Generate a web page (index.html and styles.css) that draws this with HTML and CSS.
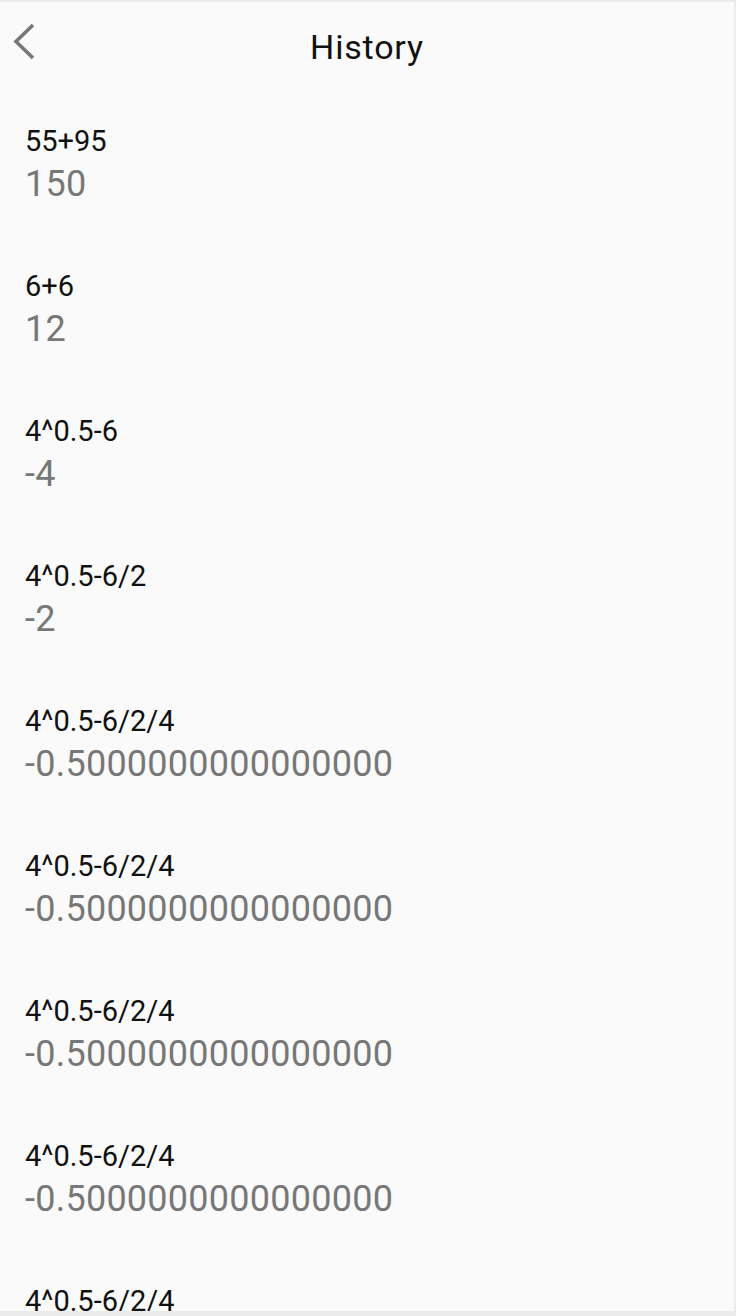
FILE: index.html
```html
<!DOCTYPE html>
<html>
<head>
<meta charset="utf-8">
<link rel="stylesheet" href="styles.css">
</head>
<body>
<div class="screen">
  <header class="bar">
    <svg class="back" viewBox="0 0 48 90" width="48" height="90">
      <polyline points="33,23 16,39.5 33,56" fill="none" stroke="#777" stroke-width="3.6" stroke-linecap="butt" stroke-linejoin="miter"/>
    </svg>
    <h1 class="title">History</h1>
    <span class="spacer"></span>
  </header>
  <ul class="list">
    <li class="item"><div class="expr">55+95</div><div class="result">150</div></li>
    <li class="item"><div class="expr">6+6</div><div class="result">12</div></li>
    <li class="item"><div class="expr">4^0.5-6</div><div class="result">-4</div></li>
    <li class="item"><div class="expr">4^0.5-6/2</div><div class="result">-2</div></li>
    <li class="item"><div class="expr">4^0.5-6/2/4</div><div class="result">-0.5000000000000000</div></li>
    <li class="item"><div class="expr">4^0.5-6/2/4</div><div class="result">-0.5000000000000000</div></li>
    <li class="item"><div class="expr">4^0.5-6/2/4</div><div class="result">-0.5000000000000000</div></li>
    <li class="item"><div class="expr">4^0.5-6/2/4</div><div class="result">-0.5000000000000000</div></li>
    <li class="item"><div class="expr">4^0.5-6/2/4</div><div class="result">-0.5000000000000000</div></li>
  </ul>
</div>
</body>
</html>
```
FILE: styles.css
```css
html, body {
  margin: 0;
  padding: 0;
  background: #ebebeb;
}
body {
  font-family: Roboto, "Liberation Sans", sans-serif;
}
.screen {
  width: 736px;
  height: 1316px;
  box-sizing: border-box;
  border-top: 2px solid #ebebeb;
  border-right: 2px solid #ebebeb;
  border-bottom: 5px solid #ebebeb;
  background: #fafafa;
  overflow: hidden;
}
.bar {
  height: 90px;
  display: grid;
  grid-template-columns: 1fr auto 1fr;
  align-items: center;
}
.back {
  display: block;
  align-self: stretch;
}
.title {
  margin: 0;
  font-size: 34px;
  letter-spacing: 0.8px;
  font-weight: 400;
  color: #111;
  line-height: 40px;
}
.list {
  list-style: none;
  margin: 0;
  padding: 0;
}
.item {
  height: 145px;
  box-sizing: border-box;
  padding: 33px 0 0 25px;
}
.expr {
  font-size: 29px;
  line-height: 33px;
  color: #111;
}
.result {
  margin-top: 5px;
  font-size: 36px;
  letter-spacing: 0.25px;
  line-height: 42px;
  color: #777;
}
```
